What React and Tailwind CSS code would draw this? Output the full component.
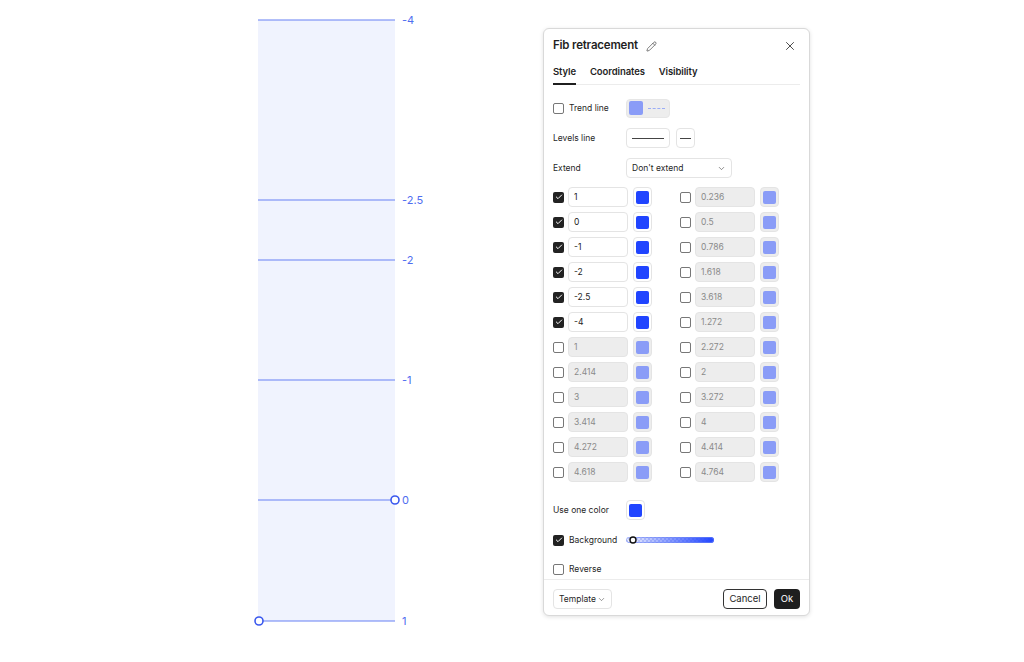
import React, { useState } from 'react'
import { Pencil, X, ChevronDown, Check } from 'lucide-react'

const LEFT_LEVELS = [
  { value: '1', on: true },
  { value: '0', on: true },
  { value: '-1', on: true },
  { value: '-2', on: true },
  { value: '-2.5', on: true },
  { value: '-4', on: true },
  { value: '1', on: false },
  { value: '2.414', on: false },
  { value: '3', on: false },
  { value: '3.414', on: false },
  { value: '4.272', on: false },
  { value: '4.618', on: false },
]

const RIGHT_LEVELS = [
  '0.236', '0.5', '0.786', '1.618', '3.618', '1.272',
  '2.272', '2', '3.272', '4', '4.414', '4.764',
].map((value) => ({ value, on: false }))

// price levels drawn on the chart, y in px
const CHART_LEVELS = [
  { label: '-4', y: 20 },
  { label: '-2.5', y: 200 },
  { label: '-2', y: 260 },
  { label: '-1', y: 380 },
  { label: '0', y: 500 },
  { label: '1', y: 621 },
]

const Checkbox = ({ checked, onChange }) => (
  <button
    type="button"
    onClick={onChange}
    className={`w-[11px] h-[11px] shrink-0 rounded-[2px] flex items-center justify-center ${
      checked ? 'bg-[#222]' : 'border border-[#777] bg-white'
    }`}
  >
    {checked && <Check size={8} strokeWidth={3} className="text-white" />}
  </button>
)

const Swatch = ({ active }) => (
  <div
    className={`w-[19px] h-[20px] shrink-0 rounded-[4px] border border-[#e4e4e4] flex items-center justify-center ${
      active ? 'bg-white' : 'bg-[#ededed]'
    }`}
  >
    <div className={`w-[13px] h-[13px] rounded-[2px] ${active ? 'bg-[#2145ff]' : 'bg-[#8a9cf7]'}`} />
  </div>
)

const LevelRow = ({ level, onToggle }) => (
  <div className="flex items-center h-[20px]">
    <Checkbox checked={level.on} onChange={onToggle} />
    <input
      value={level.value}
      readOnly
      className={`ml-[4px] w-[60px] h-[20px] rounded-[4px] border border-[#e4e4e4] pl-[5px] text-[8.5px] outline-none ${
        level.on ? 'bg-white text-[#222]' : 'bg-[#ededed] text-[#8a8a8a]'
      }`}
    />
    <div className="ml-[5px]">
      <Swatch active={level.on} />
    </div>
  </div>
)

// label column in the form, controls start at a fixed offset
const Label = ({ children }) => <span className="w-[73px] shrink-0">{children}</span>

const CheckLabel = ({ checked, onChange, children }) => (
  <div className="w-[73px] shrink-0 flex items-center">
    <Checkbox checked={checked} onChange={onChange} />
    <span className="ml-[5px]">{children}</span>
  </div>
)

const Chart = () => (
  <svg className="absolute inset-0" width="1024" height="662">
    <rect x="258" y="20" width="137" height="601" fill="#f0f3fe" />
    {CHART_LEVELS.map((l) => (
      <g key={l.label}>
        <line x1="258" x2="395" y1={l.y} y2={l.y} stroke="#6680f4" strokeWidth="1.2" />
        <text
          x="402"
          y={l.y + 4}
          fontSize="11"
          fill="#4f6df0"
          fontFamily="Inter, sans-serif"
        >
          {l.label}
        </text>
      </g>
    ))}
    <circle cx="395" cy="500" r="4" fill="white" stroke="#3a58ee" strokeWidth="1.6" />
    <circle cx="259" cy="621" r="4" fill="white" stroke="#3a58ee" strokeWidth="1.6" />
  </svg>
)

const OpacitySlider = () => (
  <svg width="88" height="8" className="block">
    <defs>
      <pattern id="checks" width="4" height="4" patternUnits="userSpaceOnUse">
        <rect width="4" height="4" fill="#fff" />
        <rect width="2" height="2" fill="#d6dcf8" />
        <rect x="2" y="2" width="2" height="2" fill="#d6dcf8" />
      </pattern>
      <linearGradient id="fade" x1="0" x2="1">
        <stop offset="0" stopColor="#2145ff" stopOpacity="0.05" />
        <stop offset="1" stopColor="#2145ff" stopOpacity="1" />
      </linearGradient>
      <clipPath id="track">
        <rect x="0" y="1" width="88" height="6" rx="3" />
      </clipPath>
    </defs>
    <g clipPath="url(#track)">
      <rect x="0" y="1" width="88" height="6" fill="url(#checks)" />
      <rect x="0" y="1" width="88" height="6" fill="url(#fade)" />
    </g>
    <rect x="0.5" y="1.5" width="87" height="5" rx="2.5" fill="none" stroke="#6f86f5" strokeWidth="0.6" />
    <circle cx="7" cy="4" r="3" fill="white" stroke="#111" strokeWidth="1.4" />
  </svg>
)

export default function App() {
  const [tab, setTab] = useState('Style')
  const [left, setLeft] = useState(LEFT_LEVELS)
  const [right, setRight] = useState(RIGHT_LEVELS)
  const [trend, setTrend] = useState(false)
  const [background, setBackground] = useState(true)
  const [reverse, setReverse] = useState(false)

  const toggle = (list, setList, i) =>
    setList(list.map((l, j) => (j === i ? { ...l, on: !l.on } : l)))

  return (
    <div
      className="relative w-[1024px] h-[662px] bg-white overflow-hidden text-[#1f1f1f]"
      style={{ fontFamily: 'Inter, "Noto Sans", sans-serif' }}
    >
      <Chart />

      {/* settings dialog */}
      <div className="absolute left-[543px] top-[28px] w-[267px] bg-white border border-[#d9d9d9] rounded-[6px] shadow-[0_1px_4px_rgba(0,0,0,0.12)] flex flex-col">
        <div className="pl-[9px] pr-[9px] pt-[10px]">
          <div className="flex items-center h-[14px]">
            <span className="text-[11.5px] font-semibold tracking-[-0.2px]">Fib retracement</span>
            <Pencil size={11} strokeWidth={1.5} className="ml-[8px] text-[#444]" />
            <X size={14} strokeWidth={1.5} className="ml-auto mr-[3px] text-[#333]" />
          </div>

          <div className="mt-[13px] flex gap-[14px] border-b border-[#ececec]">
            {['Style', 'Coordinates', 'Visibility'].map((t) => (
              <button
                key={t}
                type="button"
                onClick={() => setTab(t)}
                className={`-mb-px pb-[5px] text-[9.5px] leading-[12px] font-semibold tracking-[-0.1px] ${
                  tab === t ? 'border-b-2 border-[#1f1f1f]' : 'border-b-2 border-transparent'
                }`}
              >
                {t}
              </button>
            ))}
          </div>

          <div className="text-[8.5px]">
            <div className="mt-[13px] flex items-center h-[20px]">
              <CheckLabel checked={trend} onChange={() => setTrend(!trend)}>Trend line</CheckLabel>
              <div className="w-[44px] h-[19px] rounded-[4px] bg-[#ededed] border border-[#e6e6e6] flex items-center pl-[2px]">
                <div className="w-[14px] h-[14px] rounded-[2px] bg-[#8a9cf7]" />
                <div className="ml-[5px] w-[17px] border-t border-dashed border-[#9badf7]" />
              </div>
            </div>

            <div className="mt-[10px] flex items-center h-[20px]">
              <Label>Levels line</Label>
              <div className="w-[44px] h-[20px] rounded-[4px] border border-[#e4e4e4] flex items-center justify-center">
                <div className="w-[32px] border-t border-[#444]" />
              </div>
              <div className="ml-[6px] w-[19px] h-[20px] rounded-[4px] border border-[#e4e4e4] flex items-center justify-center">
                <div className="w-[11px] border-t border-[#444]" />
              </div>
            </div>

            <div className="mt-[10px] flex items-center h-[20px]">
              <Label>Extend</Label>
              <div className="w-[106px] h-[20px] rounded-[4px] border border-[#e4e4e4] flex items-center pl-[5px] pr-[5px]">
                <span>Don't extend</span>
                <ChevronDown size={9} strokeWidth={1.6} className="ml-auto text-[#444]" />
              </div>
            </div>

            <div className="mt-[9px] grid grid-cols-[127px_1fr]">
              <div className="flex flex-col gap-[5px]">
                {left.map((l, i) => (
                  <LevelRow key={i} level={l} onToggle={() => toggle(left, setLeft, i)} />
                ))}
              </div>
              <div className="flex flex-col gap-[5px]">
                {right.map((l, i) => (
                  <LevelRow key={i} level={l} onToggle={() => toggle(right, setRight, i)} />
                ))}
              </div>
            </div>

            <div className="mt-[18px] flex items-center h-[20px]">
              <Label>Use one color</Label>
              <Swatch active />
            </div>

            <div className="mt-[10px] flex items-center h-[20px]">
              <CheckLabel checked={background} onChange={() => setBackground(!background)}>
                Background
              </CheckLabel>
              <OpacitySlider />
            </div>

            <div className="mt-[10px] flex items-center h-[18px]">
              <CheckLabel checked={reverse} onChange={() => setReverse(!reverse)}>Reverse</CheckLabel>
            </div>
          </div>
        </div>

        <div className="mt-[1px] border-t border-[#ececec] px-[9px] pt-[9px] pb-[6px] flex items-center text-[8.5px]">
          <div className="w-[59px] h-[20px] rounded-[4px] border border-[#e4e4e4] flex items-center pl-[5px] pr-[5px]">
            <span>Template</span>
            <ChevronDown size={9} strokeWidth={1.6} className="ml-auto text-[#555]" />
          </div>
          <button
            type="button"
            className="ml-auto w-[44px] h-[20px] rounded-[4px] border border-[#333] text-[9.5px] flex items-center justify-center"
          >
            Cancel
          </button>
          <button
            type="button"
            className="ml-[7px] w-[26px] h-[20px] rounded-[4px] bg-[#1e1e1e] text-white text-[9.5px] flex items-center justify-center"
          >
            Ok
          </button>
        </div>
      </div>
    </div>
  )
}
